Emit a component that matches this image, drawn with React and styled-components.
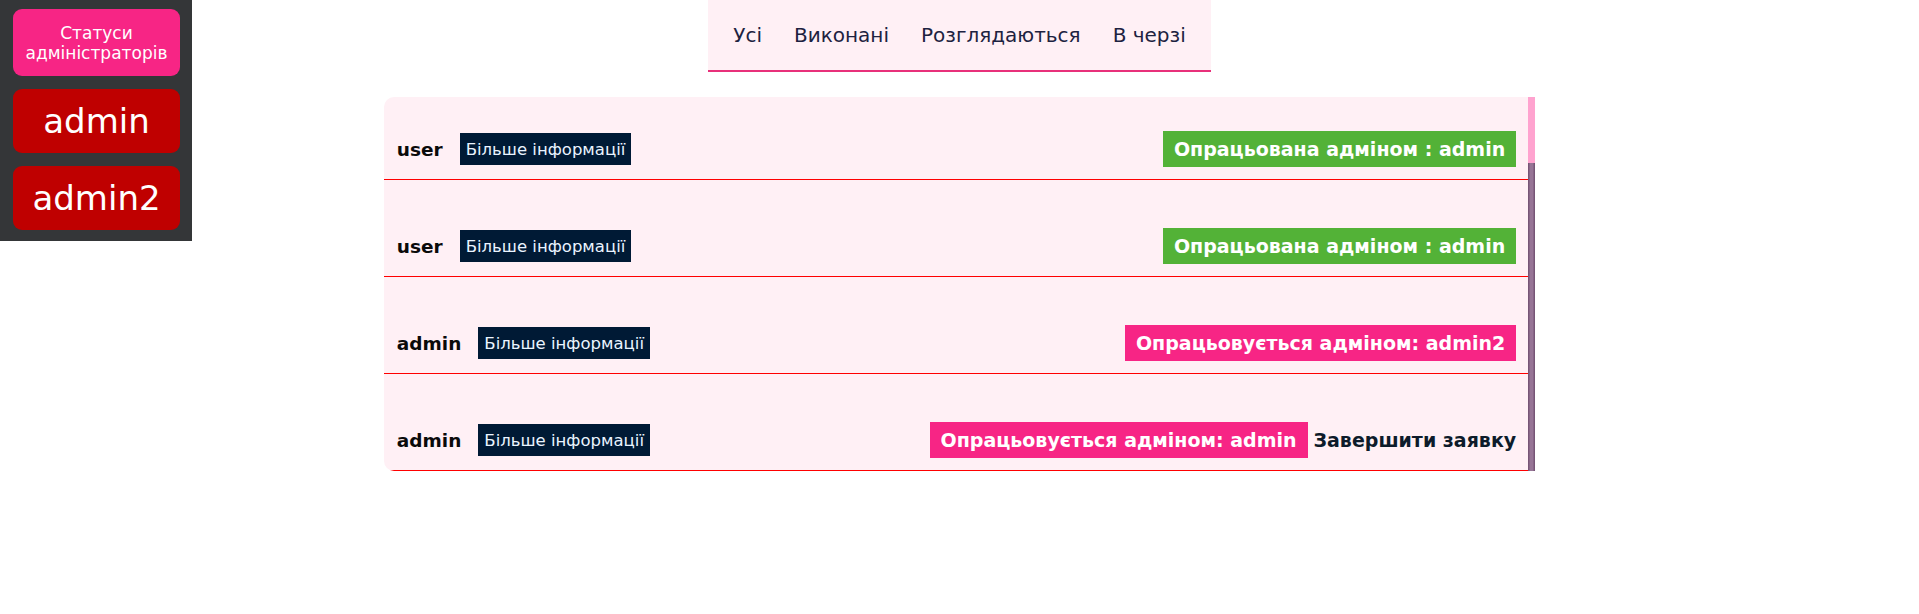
import React, { useEffect, useRef } from "react";
import styled, { createGlobalStyle } from "styled-components";

const GlobalStyle = createGlobalStyle`
  html, body {
    margin: 0;
    padding: 0;
    background: #ffffff;
    font-family: "DejaVu Sans", "Liberation Sans", sans-serif;
  }
`;

const admins = ["admin", "admin2"];
const tabs = ["Усі", "Виконані", "Розглядаються", "В черзі"];

const requests = [
  { id: 1, user: "user", status: "done", admin: "admin" },
  { id: 2, user: "user", status: "done", admin: "admin" },
  { id: 3, user: "admin", status: "progress", admin: "admin2" },
  { id: 4, user: "admin", status: "progress", admin: "admin", own: true },
];

function App() {
  const listRef = useRef(null);

  useEffect(() => {
    if (listRef.current) {
      listRef.current.scrollTop = listRef.current.scrollHeight;
    }
  }, []);

  return (
    <Page>
      <GlobalStyle />
      <Sidebar>
        <StatusButton>Статуси адміністраторів</StatusButton>
        {admins.map((name) => (
          <AdminButton key={name}>{name}</AdminButton>
        ))}
      </Sidebar>

      <Tabs>
        {tabs.map((t) => (
          <Tab key={t}>{t}</Tab>
        ))}
      </Tabs>

      <ListFrame>
        <List ref={listRef}>
          {requests.map((r) => (
            <Row key={r.id}>
              <Left>
                <UserName>{r.user}</UserName>
                <InfoButton>Більше інформації</InfoButton>
              </Left>
              <Right>
                {r.status === "done" ? (
                  <Badge $done>Опрацьована адміном : {r.admin}</Badge>
                ) : (
                  <Badge>Опрацьовується адміном: {r.admin}</Badge>
                )}
                {r.own && <FinishLink>Завершити заявку</FinishLink>}
              </Right>
            </Row>
          ))}
        </List>
        <ScrollTrack>
          <ScrollThumb />
        </ScrollTrack>
      </ListFrame>
    </Page>
  );
}

const Page = styled.div`
  min-height: 614px;
  display: flex;
  flex-direction: column;
  align-items: center;
`;

const Sidebar = styled.aside`
  position: fixed;
  top: 0;
  left: 0;
  width: 192px;
  height: 241px;
  box-sizing: border-box;
  padding: 9px 12px 0 13px;
  background: #343638;
  display: flex;
  flex-direction: column;
  gap: 13px;
`;

const StatusButton = styled.div`
  height: 67px;
  border-radius: 9px;
  background: #f72585;
  color: #fff;
  font-size: 17px;
  line-height: 20px;
  text-align: center;
  display: flex;
  align-items: center;
  justify-content: center;
  padding: 0 4px;
`;

const AdminButton = styled.div`
  height: 64px;
  border-radius: 9px;
  background: #bf0000;
  color: #fff;
  font-size: 34px;
  display: flex;
  align-items: center;
  justify-content: center;
`;

const Tabs = styled.nav`
  height: 70px;
  padding: 0 9px;
  display: flex;
  align-items: center;
  background: #fff0f5;
  border-bottom: 2px solid #e8307a;
`;

const Tab = styled.span`
  padding: 0 16px;
  font-size: 20px;
  color: #1d2240;
  cursor: pointer;
`;

const ListFrame = styled.section`
  margin-top: 25px;
  width: 60%;
  height: 374px;
  display: flex;
  border-radius: 10px 0 0 10px;
  background: #fff0f5;
  overflow: hidden;
`;

const List = styled.div`
  flex: 1;
  overflow-y: scroll;
  scrollbar-width: none;

  &::-webkit-scrollbar {
    display: none;
  }
`;

const ScrollTrack = styled.div`
  width: 7px;
  flex-shrink: 0;
  display: flex;
  flex-direction: column;
  background: #ffa3cf;
`;

const ScrollThumb = styled.div`
  margin-top: 66px;
  flex: 1;
  background: linear-gradient(90deg, #6f4d6e 0%, #977596 35%, #977596 65%, #6f4d6e 100%);
`;

const Row = styled.div`
  display: flex;
  align-items: center;
  justify-content: space-between;
  padding: 48px 12px 12px 13px;
  border-bottom: 1px solid #ff0000;
`;

const Left = styled.div`
  display: flex;
  align-items: center;
  gap: 17px;
`;

const UserName = styled.span`
  font-size: 18.5px;
  font-weight: 700;
  color: #0a0a0a;
`;

const InfoButton = styled.button`
  height: 32px;
  padding: 0 6px;
  border: none;
  background: #001a35;
  color: #eaf4ff;
  font-family: inherit;
  font-size: 16.5px;
  cursor: pointer;
`;

const Right = styled.div`
  display: flex;
  align-items: center;
  gap: 6px;
`;

const Badge = styled.div`
  height: 36px;
  padding: 0 11px;
  display: flex;
  align-items: center;
  background: ${(p) => (p.$done ? "#53b237" : "#f72585")};
  color: #fff;
  font-size: 19px;
  font-weight: 700;
`;

const FinishLink = styled.span`
  font-size: 19px;
  font-weight: 700;
  color: #0d1b2a;
  cursor: pointer;
`;

export default App;
